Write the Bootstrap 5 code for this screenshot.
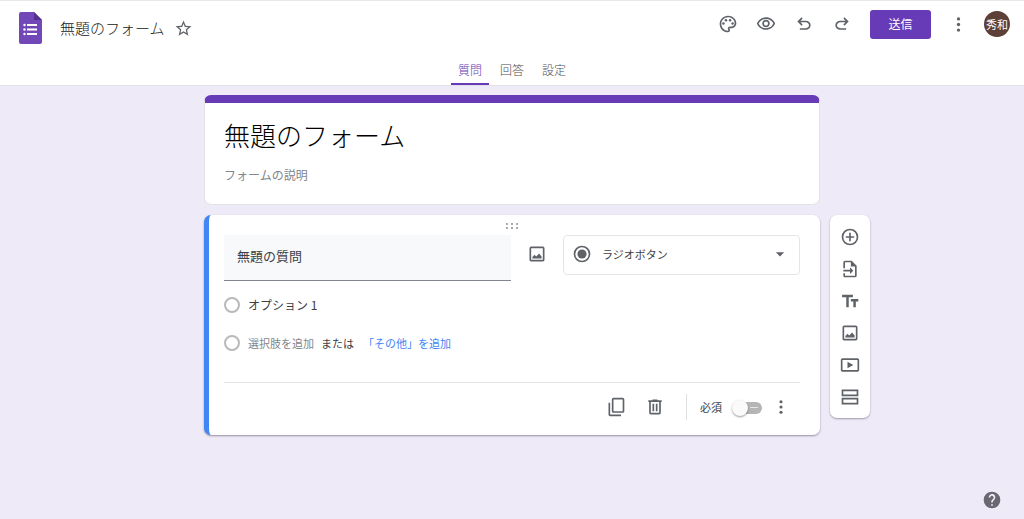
<!DOCTYPE html>
<html lang="ja">
<head>
<meta charset="utf-8">
<meta name="viewport" content="width=device-width, initial-scale=1">
<title>無題のフォーム</title>
<link href="https://cdn.jsdelivr.net/npm/bootstrap@5.3.0/dist/css/bootstrap.min.css" rel="stylesheet">
<style>
:root { --violet: #673ab7; --ink: #202124; --grey: #5f6368; --line: #e3e3e6; }
body { font-family: "Noto Sans CJK JP", sans-serif; font-size: 12px; line-height: 18px; font-weight: 300; color: var(--ink); background: #eeeaf7; }
svg { display: block; fill: currentColor; }
.topbar { background: #fff; border-top: 1px solid #e8e8e8; border-bottom: 1px solid #e3e0ea; }
.toprow { height: 46px; padding-left: 18px; padding-right: 14px; }
.icon-btn { width: 32px; height: 32px; padding: 0; border: 0; background: transparent; color: var(--grey); display: flex; align-items: center; justify-content: center; flex: none; }
.plain-input { border: 0; padding: 0; background: transparent; color: inherit; font-weight: inherit; min-width: 0; outline: 0; }
.doc-name { width: 107px; font-size: 15px; line-height: 24px; margin-left: 18px; }
.tools { gap: 6px; }
.send-btn { width: 61px; height: 29px; padding: 0; border: 0; border-radius: 3px; background: var(--violet); color: #fff; font-size: 12px; font-weight: 400; margin: 0 5px 0 6px; }
.avatar-btn { width: 26px; height: 26px; padding: 0; border: 0; border-radius: 50%; background: #5d4037; color: #fff; font-size: 11px; line-height: 26px; margin-left: 4px; }
.tab-row { gap: 4px; padding-top: 11px; }
.tab-link { width: 38px; height: 27px; padding-top: 3px; text-align: center; text-decoration: none; color: #4a4d51; border-bottom: 2px solid transparent; border-radius: 2px 2px 0 0; }
.tab-link.active { color: var(--violet); border-color: var(--violet); }
.board { display: grid; grid-template-columns: minmax(50px, 1fr) minmax(0, 616px) minmax(50px, 1fr); row-gap: 10px; padding: 9px 0 48px; }
.panel { grid-column: 2; background: #fff; border-radius: 7px; }
.title-panel { border: 1px solid var(--line); border-top: 8px solid var(--violet); padding: 14px 19px 20px; }
.form-title { font-size: 26px; line-height: 36px; height: 36px; color: #000; }
.form-desc { height: 18px; margin-top: 13px; }
.form-desc::placeholder { color: #80868b; opacity: 1; font-weight: 400; }
.question-panel { border-left: 5px solid #4285f4; box-shadow: 0 1px 2px rgba(40,35,60,.45); padding: 8px 20px 12px 15px; }
.drag { color: #a9abae; height: 6px; }
.question-head { margin-top: 6px; }
.question-text { flex: 1 1 0; height: 46px; padding: 0 13px 4px; font-size: 13px; background: #f8f9fa; border-bottom: 1px solid #80868b; font-weight: 400; color: #3c4043; }
.picture-btn { margin: 3px 10px 0; }
.type-box { width: 237px; height: 40px; flex: none; position: relative; color: var(--grey); }
.type-select { width: 100%; height: 40px; appearance: none; border: 1px solid #e4e5e8; border-radius: 4px; background: #fff; padding: 0 36px 2px 38px; font-size: 11px; font-weight: 400; color: #3c4043; }
.type-icon { position: absolute; left: 9px; top: 9px; pointer-events: none; }
.type-arrow { position: absolute; right: 10px; top: 9px; pointer-events: none; }
.options { padding-top: 14px; }
.option-row { height: 20px; margin-bottom: 18px; gap: 8px; }
.option-row label { font-weight: 400; color: #3c4043; }
.dot-radio { appearance: none; width: 16px; height: 16px; margin: 0; border: 2px solid #b9b9b9; border-radius: 50%; background: #fff; flex: none; }
.add-line { gap: 7px; font-size: 11px; font-weight: 400; color: #3c4043; }
.txt-btn { border: 0; padding: 0; background: transparent; color: #80868b; }
.other-btn { color: #4285f4; margin-left: 2px; }
.foot { border-top: 1px solid #e4e5e8; margin-top: 29px; padding: 8px 3px 0 0; gap: 7px; }
.foot-rule { width: 1px; height: 26px; background: #e0e0e0; margin: 0 5px 0 8px; }
.req-label { font-size: 11px; margin-left: 8px; font-weight: 400; color: #3c4043; }
.switch-box { appearance: none; position: relative; width: 30px; height: 18px; margin: 0 0 0 10px; }
.switch-box::before { content: ""; position: absolute; left: 2px; right: 0; top: 4px; height: 12px; border-radius: 6px; background: linear-gradient(#e6e6e6, #e6e6e6) 16px 5px / 8px 1px no-repeat, #b5b5b5; }
.switch-box::after { content: ""; position: absolute; left: 0; top: 2px; width: 16px; height: 16px; border-radius: 50%; background: #fafafa; box-shadow: 0 1px 2px rgba(0,0,0,.4); }
.foot-more { margin-left: -4px; }
.side-tools { grid-column: 3; grid-row: 2; justify-self: start; align-self: start; width: 40px; margin-left: 10px; padding: 6px 0 5px; background: #fff; border-radius: 7px; box-shadow: 0 1px 2px rgba(40,35,60,.4); }
.help-btn { right: 16px; bottom: 3px; color: #6b6770; }
</style>
</head>
<body class="min-vh-100">
<svg width="0" height="0" class="position-absolute" aria-hidden="true">
  <symbol id="i-more" viewBox="0 0 24 24"><circle cx="12" cy="5" r="2.1"/><circle cx="12" cy="12" r="2.1"/><circle cx="12" cy="19" r="2.1"/></symbol>
  <symbol id="i-image" viewBox="0 0 24 24"><path d="M19 5v14H5V5h14m0-2H5a2 2 0 0 0-2 2v14c0 1.100.9 2 2 2h14a2 2 0 0 0 2-2V5a2 2 0 0 0-2-2z"/><path d="M6.500 17.500v-2l2.500-2.500 2 2 3.500-3.500 3 3.500v2.500z"/></symbol>
</svg>

<header class="topbar">
  <div class="toprow d-flex align-items-center">
    <a href="#" aria-label="フォーム ホーム"><svg width="24" height="34" viewBox="0 0 24 34" class="mt-2"><path fill="#7248b9" d="M3 1h13l8 8v22a2 2 0 0 1-2 2H3a2 2 0 0 1-2-2V3a2 2 0 0 1 2-2z"/><path fill="#54308f" d="M16 1l8 8h-8z"/><g fill="#fff"><circle cx="6.500" cy="14" r="1.200"/><circle cx="6.500" cy="18.500" r="1.200"/><circle cx="6.500" cy="23" r="1.200"/><path d="M9 13h10v2H9zM9 17.500h10v2H9zM9 22h10v2H9z"/></g></svg></a>
    <input class="plain-input doc-name mt-2" value="無題のフォーム" aria-label="ドキュメント名">
    <button type="button" class="icon-btn mt-2" aria-label="スター"><svg width="19" height="19" viewBox="0 0 24 24"><path d="M22 9.240l-7.190-.62L12 2 9.190 8.630 2 9.240l5.460 4.730L5.820 21 12 17.270 18.180 21l-1.630-7.030L22 9.240zM12 15.400l-3.760 2.270 1-4.280-3.320-2.880 4.380-.38L12 6.100l1.710 4.040 4.380.38-3.320 2.880 1 4.280L12 15.400z"/></svg></button>
    <div class="tools d-flex align-items-center ms-auto">
      <button type="button" class="icon-btn" aria-label="テーマ"><svg width="20" height="20" viewBox="0 0 24 24"><path d="M12 22C6.490 22 2 17.510 2 12S6.490 2 12 2s10 4.040 10 9c0 3.310-2.690 6-6 6h-1.770c-.28 0-.5.220-.5.500 0 .12.050.23.130.33.410.470.640 1.060.640 1.670A2.500 2.500 0 0 1 12 22zm0-18c-4.410 0-8 3.590-8 8s3.590 8 8 8c.28 0 .5-.220.500-.5a.54.54 0 0 0-.14-.35c-.41-.46-.63-1.050-.63-1.650a2.500 2.500 0 0 1 2.500-2.500H16c2.210 0 4-1.790 4-4 0-3.860-3.590-7-8-7z"/><circle cx="6.500" cy="11.500" r="1.500"/><circle cx="9.500" cy="7.500" r="1.500"/><circle cx="14.500" cy="7.500" r="1.500"/><circle cx="17.500" cy="11.500" r="1.500"/></svg></button>
      <button type="button" class="icon-btn" aria-label="プレビュー"><svg width="20" height="20" viewBox="0 0 24 24"><path d="M12 6a9.770 9.770 0 0 1 8.820 5.500 9.760 9.760 0 0 1-17.640 0A9.770 9.770 0 0 1 12 6m0-2C7 4 2.730 7.110 1 11.500 2.730 15.890 7 19 12 19s9.270-3.110 11-7.500C21.270 7.110 17 4 12 4zm0 5a2.500 2.500 0 0 1 0 5 2.500 2.500 0 0 1 0-5m0-2c-2.480 0-4.500 2.020-4.500 4.500S9.520 16 12 16s4.500-2.020 4.500-4.500S14.480 7 12 7z"/></svg></button>
      <button type="button" class="icon-btn" aria-label="元に戻す"><svg width="20" height="20" viewBox="0 0 24 24"><path d="M7 19v-2h7.100q1.575 0 2.738-1T18 13.500 16.837 11 14.100 10H7.800l2.600 2.600L9 14 4 9l5-5 1.400 1.400L7.800 8h6.300q2.425 0 4.163 1.575T20 13.500t-1.737 3.925T14.100 19z"/></svg></button>
      <button type="button" class="icon-btn" aria-label="やり直す"><svg width="20" height="20" viewBox="0 0 24 24"><path transform="matrix(-1 0 0 1 24 0)" d="M7 19v-2h7.100q1.575 0 2.738-1T18 13.500 16.837 11 14.100 10H7.800l2.600 2.600L9 14 4 9l5-5 1.400 1.400L7.800 8h6.300q2.425 0 4.163 1.575T20 13.500t-1.737 3.925T14.100 19z"/></svg></button>
      <button type="button" class="send-btn">送信</button>
      <button type="button" class="icon-btn" aria-label="その他"><svg width="19" height="19"><use href="#i-more"/></svg></button>
      <button type="button" class="avatar-btn">秀和</button>
    </div>
  </div>
  <nav class="tab-row d-flex justify-content-center" aria-label="フォーム">
    <a href="#" class="tab-link active">質問</a>
    <a href="#" class="tab-link">回答</a>
    <a href="#" class="tab-link">設定</a>
  </nav>
</header>

<main class="board">
  <section class="panel title-panel">
    <input class="plain-input form-title d-block w-100" value="無題のフォーム" aria-label="フォームのタイトル">
    <input class="plain-input form-desc d-block w-100" placeholder="フォームの説明" aria-label="フォームの説明">
  </section>

  <section class="panel question-panel">
    <svg class="drag mx-auto" width="14" height="6" viewBox="0 0 14 6"><path d="M1 0h2v2H1zM6 0h2v2H6zM11 0h2v2h-2zM1 4h2v2H1zM6 4h2v2H6zM11 4h2v2h-2z"/></svg>
    <div class="question-head d-flex align-items-start">
      <input class="plain-input question-text" value="無題の質問" aria-label="質問">
      <button type="button" class="icon-btn picture-btn" aria-label="画像を追加"><svg width="20" height="20"><use href="#i-image"/></svg></button>
      <div class="type-box">
        <select class="type-select" aria-label="質問の形式"><option>ラジオボタン</option></select>
        <svg class="type-icon" width="20" height="20" viewBox="0 0 24 24"><circle cx="12" cy="12" r="9" fill="none" stroke="currentColor" stroke-width="2"/><circle cx="12" cy="12" r="5.500"/></svg>
        <svg class="type-arrow" width="20" height="20" viewBox="0 0 24 24"><path d="M7 10l5 5 5-5z"/></svg>
      </div>
    </div>
    <div class="options">
      <div class="option-row d-flex align-items-center">
        <input class="dot-radio" type="radio" name="q" id="opt1">
        <label for="opt1">オプション 1</label>
      </div>
      <div class="option-row d-flex align-items-center">
        <input class="dot-radio" type="radio" name="q" aria-label="選択肢を追加">
        <div class="add-line d-flex"><button type="button" class="txt-btn">選択肢を追加</button><span>または</span><button type="button" class="txt-btn other-btn">「その他」を追加</button></div>
      </div>
    </div>
    <div class="foot d-flex align-items-center justify-content-end">
      <button type="button" class="icon-btn" aria-label="コピー"><svg width="20" height="20" viewBox="0 0 24 24"><path d="M20 1H9a2 2 0 0 0-2 2v14c0 1.100.9 2 2 2h11a2 2 0 0 0 2-2V3a2 2 0 0 0-2-2zm0 16H9V3h11v14zM3 7h2v14h13v2H5a2 2 0 0 1-2-2z"/></svg></button>
      <button type="button" class="icon-btn" aria-label="削除"><svg width="20" height="20" viewBox="0 0 24 24"><path d="M15 4V3H9v1H4v2h1v13c0 1.100.9 2 2 2h10a2 2 0 0 0 2-2V6h1V4h-5zm2 15H7V6h10v13zM9 8h2v9H9zM13 8h2v9h-2z"/></svg></button>
      <div class="d-flex align-items-center ms-auto ms-sm-0">
        <div class="foot-rule"></div>
        <label for="req" class="req-label">必須</label>
        <input id="req" type="checkbox" role="switch" class="switch-box">
      </div>
      <button type="button" class="icon-btn foot-more" aria-label="その他のオプション"><svg width="18" height="18"><use href="#i-more"/></svg></button>
    </div>
  </section>

  <aside class="side-tools d-flex flex-column align-items-center">
    <button type="button" class="icon-btn" aria-label="質問を追加"><svg width="20" height="20" viewBox="0 0 24 24"><path d="M13 7h-2v4H7v2h4v4h2v-4h4v-2h-4V7zm-1-5a10 10 0 1 0 0 20 10 10 0 0 0 0-20zm0 18a8 8 0 1 1 0-16 8 8 0 0 1 0 16z"/></svg></button>
    <button type="button" class="icon-btn" aria-label="質問をインポート"><svg width="20" height="20" viewBox="0 0 24 24"><path d="M14 2H6a2 2 0 0 0-2 2v7h2V4h7v5h5v11H6v-3H4v3c0 1.100.9 2 2 2h12a2 2 0 0 0 2-2V8z"/><path d="M12 10l4 4-4 4v-3H4v-2h8z"/></svg></button>
    <button type="button" class="icon-btn" aria-label="タイトルと説明を追加"><svg width="20" height="20" viewBox="0 0 24 24"><path d="M2.500 4.500v3h5v12h3v-12h5v-3zM22 9.500h-9v3h3v7h3v-7h3z"/></svg></button>
    <button type="button" class="icon-btn" aria-label="画像を追加"><svg width="20" height="20"><use href="#i-image"/></svg></button>
    <button type="button" class="icon-btn" aria-label="動画を追加"><svg width="20" height="20" viewBox="0 0 24 24"><path d="M9 8v8l7-4zM21 4H3a2 2 0 0 0-2 2v12c0 1.100.9 2 2 2h18a2 2 0 0 0 2-2V6a2 2 0 0 0-2-2zm0 14H3V6h18z"/></svg></button>
    <button type="button" class="icon-btn" aria-label="セクションを追加"><svg width="20" height="20" viewBox="0 0 24 24"><path d="M20 5v4H4V5h16m2-2H2v8h20V3zM20 15v4H4v-4h16m2-2H2v8h20v-8z"/></svg></button>
  </aside>
</main>

<button type="button" class="icon-btn help-btn position-fixed" aria-label="ヘルプ"><svg width="20" height="20" viewBox="0 0 24 24"><path d="M12 2a10 10 0 1 0 0 20 10 10 0 0 0 0-20zm1 17h-2v-2h2v2zm2.070-7.750l-.9.920C13.450 12.900 13 13.500 13 15h-2v-.5c0-1.100.45-2.100 1.170-2.830l1.240-1.260A2 2 0 1 0 10 9H8a4 4 0 1 1 7.070 2.250z"/></svg></button>
<script src="https://cdn.jsdelivr.net/npm/bootstrap@5.3.0/dist/js/bootstrap.bundle.min.js"></script>
</body>
</html>
